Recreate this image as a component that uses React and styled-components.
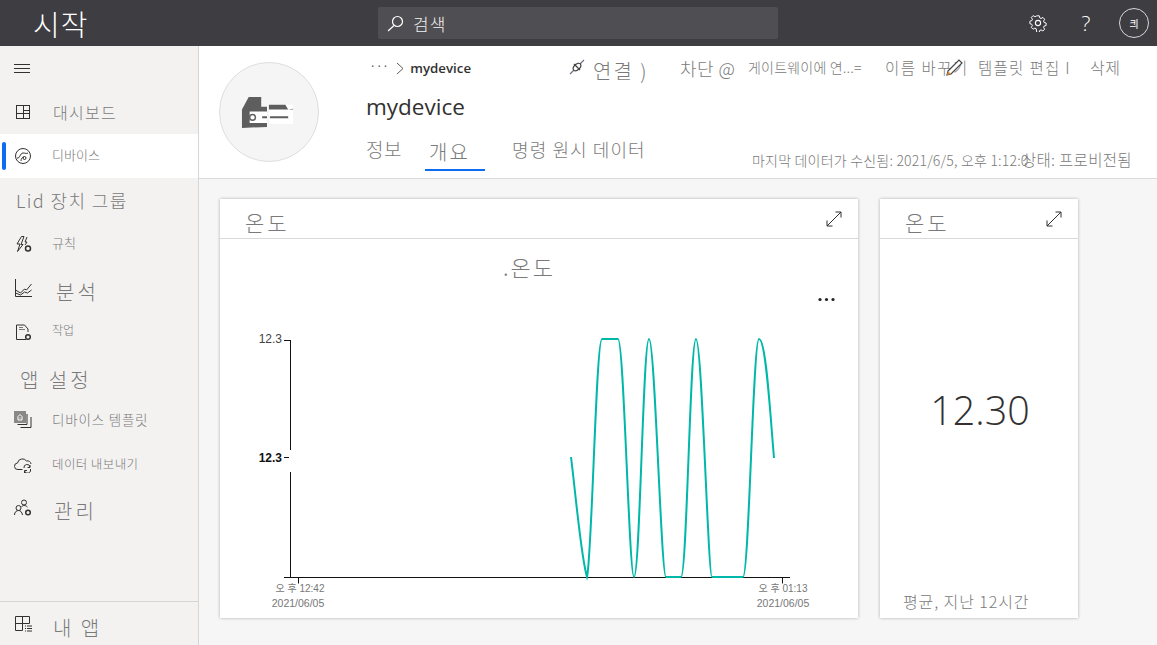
import React from "react";
import styled, { createGlobalStyle } from "styled-components";

const KR = `"Noto Sans CJK KR", "Open Sans", sans-serif`;
const UI = `"Open Sans", "Noto Sans CJK KR", sans-serif`;

const GlobalStyle = createGlobalStyle`
  html, body {
    margin: 0;
    padding: 0;
    height: 100%;
    overflow: hidden;
    background: #f6f6f6;
    font-family: ${KR};
  }
  * {
    box-sizing: border-box;
  }
`;

const Page = styled.div`
  width: 1157px;
  height: 645px;
  display: flex;
  flex-direction: column;
  overflow: hidden;
`;

const TopBar = styled.header`
  height: 46px;
  flex: none;
  background: #3e3d42;
  display: flex;
  align-items: center;
  color: #fff;
`;

const Brand = styled.div`
  width: 378px;
  padding-left: 33px;
  font-size: 29px;
  font-weight: 300;
  letter-spacing: 1px;
  line-height: 46px;
`;

const SearchBox = styled.div`
  width: 400px;
  height: 32px;
  background: #4f4e53;
  border-radius: 2px;
  display: flex;
  align-items: center;
  gap: 9px;
  padding-left: 9px;
  font-size: 17px;
  letter-spacing: 1px;
  font-weight: 300;
  color: #f3f2f1;
`;

const TopIcons = styled.div`
  margin-left: auto;
  display: flex;
  align-items: center;
  padding-right: 8px;
`;

const TopIcon = styled.div`
  width: ${({ $w }) => $w}px;
  display: flex;
  justify-content: center;
  font-family: ${UI};
  font-size: 21px;
  font-weight: 300;
  line-height: 30px;
`;

const Avatar = styled.div`
  width: 30px;
  height: 30px;
  margin-left: 9px;
  border: 1px solid #d8d8d8;
  border-radius: 50%;
  display: flex;
  align-items: center;
  justify-content: center;
  font-size: 10px;
`;

const Body = styled.div`
  flex: 1;
  display: flex;
  min-height: 0;
`;

const Sidebar = styled.nav`
  width: 199px;
  flex: none;
  background: #f3f2f1;
  border-right: 1px solid #d6d6d6;
  display: flex;
  flex-direction: column;
`;

const NavRow = styled.div`
  height: 44px;
  flex: none;
  display: flex;
  align-items: center;
  position: relative;
  padding-left: ${({ $indent }) => $indent ?? 14}px;
  background: ${({ $active }) => ($active ? "#fff" : "transparent")};
`;

const ActiveMark = styled.span`
  position: absolute;
  left: 2px;
  top: 8px;
  width: 4px;
  height: 28px;
  border-radius: 2px;
  background: #0f6cf0;
`;

const NavIcon = styled.svg`
  width: 18px;
  height: 18px;
  flex: none;
  fill: none;
  stroke: #323130;
  stroke-width: 1;
`;

const NavLabel = styled.span`
  margin-left: ${({ $gap }) => $gap ?? 20}px;
  padding-top: ${({ $dy }) => $dy ?? 0}px;
  margin-top: ${({ $up }) => ($up ? -$up : 0)}px;
  font-size: ${({ $size }) => $size ?? 13}px;
  font-weight: 300;
  letter-spacing: ${({ $track }) => $track ?? 0}px;
  color: #7a7a7a;
  white-space: nowrap;
`;

const NavFooter = styled.div`
  margin-top: auto;
  height: 44px;
  border-top: 1px solid #d6d6d6;
  display: flex;
  align-items: center;
  padding-left: 14px;
`;

const Main = styled.main`
  flex: 1;
  min-width: 0;
  display: flex;
  flex-direction: column;
`;

const DeviceHeader = styled.section`
  height: 133px;
  flex: none;
  background: #fff;
  border-bottom: 1px solid #dcdcdc;
  display: flex;
  padding-left: 20px;
`;

const DeviceBadge = styled.div`
  width: 100px;
  height: 100px;
  margin-top: 16px;
  flex: none;
  border-radius: 50%;
  background: #f5f5f5;
  border: 1px solid #dedede;
  display: flex;
  align-items: center;
  justify-content: center;
`;

const BadgeArt = styled.svg`
  width: 52px;
  height: 33px;
  margin-left: -4px;
`;

const DeviceInfo = styled.div`
  margin-left: 47px;
  flex: 1;
  min-width: 0;
  display: flex;
  flex-direction: column;
  position: relative;
`;

const TopLine = styled.div`
  height: 44px;
  display: flex;
  align-items: center;
`;

const Crumbs = styled.div`
  width: 203px;
  padding-left: 5px;
  display: flex;
  align-items: center;
  gap: 6px;
  font-family: ${UI};
  font-size: 13.3px;
  font-weight: 600;
  color: #323130;
`;

const Dots = styled.span`
  font-size: 13px;
  font-weight: 400;
  color: #605e5c;
  letter-spacing: 3px;
  margin-top: -4px;
`;

const Action = styled.div`
  width: ${({ $w }) => $w}px;
  flex: none;
  display: flex;
  align-items: center;
  gap: ${({ $gap }) => $gap ?? 0}px;
  margin-top: ${({ $dy }) => $dy ?? 0}px;
  font-size: ${({ $size }) => $size}px;
  font-weight: 300;
  letter-spacing: ${({ $track }) => $track ?? 0}px;
  color: #7a7a7a;
  white-space: nowrap;
  position: relative;
`;

const PlugMark = styled.svg`
  width: 16px;
  height: 16px;
  margin-top: -6px;
  fill: none;
  stroke: #444;
  stroke-width: 1.2;
`;

const PencilMark = styled.svg`
  position: absolute;
  left: 60px;
  top: 1px;
  width: 20px;
  height: 20px;
`;

const DeviceName = styled.h1`
  margin: 0;
  height: 36px;
  font-family: ${UI};
  font-size: 22.5px;
  font-weight: 400;
  line-height: 34px;
  color: #323130;
`;

const TabRow = styled.div`
  display: flex;
  margin-top: 8px;
  height: 37px;
`;

const Tab = styled.div`
  width: ${({ $w }) => $w}px;
  flex: none;
  padding: 0 ${({ $pad }) => $pad ?? 0}px;
  margin-left: ${({ $ml }) => $ml ?? 0}px;
  height: 37px;
  font-size: ${({ $size }) => $size ?? 18}px;
  font-weight: 300;
  letter-spacing: ${({ $track }) => $track ?? 0}px;
  line-height: ${({ $active }) => ($active ? 36 : 30)}px;
  color: #7a7a7a;
  white-space: nowrap;
  border-bottom: 2px solid ${({ $active }) => ($active ? "#0f6cf0" : "transparent")};
`;

const StatusLine = styled.div`
  position: absolute;
  left: 386px;
  top: 102px;
  display: flex;
  align-items: baseline;
  font-weight: 300;
  color: #7a7a7a;
  white-space: nowrap;
`;

const StatusCell = styled.span`
  width: ${({ $w }) => $w}px;
  flex: none;
  font-size: ${({ $size }) => $size ?? 13}px;
  letter-spacing: ${({ $track }) => $track ?? 0}px;
`;

const Board = styled.div`
  flex: 1;
  min-height: 0;
  display: flex;
  gap: 22px;
  padding: 20px 0 0 21px;
  background: #f6f6f6;
`;

const Card = styled.article`
  width: ${({ $w }) => $w}px;
  height: 419px;
  flex: none;
  background: #fff;
  box-shadow: 0 0 3px rgba(0, 0, 0, 0.3);
  display: flex;
  flex-direction: column;
`;

const CardHead = styled.div`
  height: 40px;
  flex: none;
  border-bottom: 1px solid #d9d9d9;
  display: flex;
  align-items: flex-start;
  justify-content: space-between;
  padding: 6px 15px 0 25px;
`;

const CardTitle = styled.span`
  font-size: 21px;
  font-weight: 300;
  letter-spacing: 3px;
  color: #7a7a7a;
  line-height: 34px;
`;

const Expand = styled.svg`
  width: 18px;
  height: 18px;
  margin-top: 5px;
  fill: none;
  stroke: #323130;
  stroke-width: 1;
`;

const ChartBody = styled.div`
  flex: 1;
  min-height: 0;
  display: flex;
  flex-direction: column;
`;

const ChartTitle = styled.div`
  height: 58px;
  padding-right: 20px;
  text-align: center;
  font-size: 22px;
  font-weight: 300;
  letter-spacing: 2px;
  line-height: 54px;
  color: #7a7a7a;
`;

const Chart = styled.svg`
  display: block;
  width: 638px;
  height: 320px;
`;

const AxisText = styled.text`
  font-family: "Liberation Sans", ${KR};
  font-size: ${({ $size }) => $size ?? 10}px;
  font-weight: ${({ $bold }) => ($bold ? 600 : 400)};
  fill: ${({ $bold, $dark }) => ($bold ? "#111" : $dark ? "#444" : "#777")};
`;

const ValueBody = styled.div`
  flex: 1;
  min-height: 0;
  display: flex;
  flex-direction: column;
  align-items: center;
`;

const Reading = styled.div`
  margin-top: 136px;
  padding-left: 2px;
  font-family: ${UI};
  font-size: 39.5px;
  font-weight: 300;
  line-height: 70px;
  color: #323130;
`;

const ReadingNote = styled.div`
  margin-top: auto;
  align-self: flex-start;
  padding: 0 0 5px 23px;
  font-size: 16px;
  font-weight: 300;
  letter-spacing: 0.9px;
  line-height: 24px;
  color: #7a7a7a;
`;

const CURVE =
  "M351 165 C356 205 361 265 367 285 C372 265 376 47 382 47 L398 47 " +
  "C404 47 409 285 414 285 C420 285 423 47 429 47 C435 47 441 285 446 285 " +
  "L461 285 C467 285 470 47 476 47 C482 47 488 285 492 285 L523 285 " +
  "C529 285 533 47 539 47 C546 47 550 120 554 166";

const Icons = {
  dashboard: (
    <>
      <rect x="2.500" y="2.500" width="13" height="13" />
      <path d="M2.500 10.500h13M9.500 2.500v13M9.500 7.500h6" />
    </>
  ),
  device: (
    <>
      <circle cx="9" cy="9" r="7.500" />
      <path d="M3 11c3 1 3-5 6-5s3 1 5 0M7 14c0-2 1-4 3-4" />
      <circle cx="10.500" cy="11" r="1.500" />
    </>
  ),
  rules: (
    <>
      <path d="M7.500 1.500 3 9h3L3.500 16.500 9 9.500H7L10 1.500zM13 2 11 7h2l-2 3" />
      <circle cx="14" cy="13.500" r="2.500" strokeWidth="1.500" />
    </>
  ),
  analytics: <path d="M1.500 0v17.500H18M1.500 11l5 3 4-4 2 1 5-6M1.500 14l5 2 4-3 3 1 4-3" />,
  jobs: (
    <>
      <path d="M12 16.500H2.500V2h8l3.500 4v3" />
      <path d="M5 4.500h4M5 6.500h6" stroke="#777" />
      <circle cx="14" cy="14" r="2.300" strokeWidth="1.500" />
    </>
  ),
  template: (
    <>
      <rect x="0" y="0" width="12" height="12" fill="#8a8886" stroke="none" />
      <path d="M3.500 13.500H13V3M6.500 16.500H17V6" />
      <path d="M4 9V5.500l2-2 2 2V9zM6 6.500v1" stroke="#fff" />
    </>
  ),
  exportData: (
    <>
      <path d="M8.500 14.500H4a3 3 0 0 1-.5-6.500 5 5 0 0 1 9-2 3.500 3.500 0 0 1 4.500 3" />
      <path d="M10 13a3 3 0 0 1 6-1M16.500 14a3 3 0 0 1-6 2M16 10v2.500h-2.500M10.500 18v-2.500H13" />
    </>
  ),
  admin: (
    <>
      <circle cx="10" cy="3.500" r="2.500" />
      <circle cx="4.500" cy="9" r="2.500" />
      <path d="M.5 16c0-3 2-4.500 4-4.500S8 13 8.500 16M7.500 8c1-2 4-2 6 0" />
      <circle cx="14" cy="13.500" r="2.300" strokeWidth="1.500" />
    </>
  ),
  apps: (
    <>
      <path d="M1.500 15.500V1.500h14v7M8.500 1.500v14M1.500 8.500h14M1.500 15.500h7" />
      <path d="M11 11h1M13 11h5M11 13.500h1M13 13.500h5M11 16h1M13 16h5" />
    </>
  ),
};

const NavItem = ({ icon, label, active, size, gap, track, dy, up }) => (
  <NavRow $active={active}>
    {active && <ActiveMark />}
    <NavIcon viewBox="0 0 18 18">{Icons[icon]}</NavIcon>
    <NavLabel $size={size} $gap={gap} $track={track} $dy={dy} $up={up}>
      {label}
    </NavLabel>
  </NavRow>
);

const ExpandIcon = () => (
  <Expand viewBox="0 0 18 18">
    <path d="M2 16 16 2M10.500 2H16v5.500M2 10.500V16h5.500" />
  </Expand>
);

const App = () => (
  <Page>
    <GlobalStyle />
    <TopBar>
      <Brand>시작</Brand>
      <SearchBox>
        <svg width="17" height="17" viewBox="0 0 17 17" fill="none" stroke="#fff" strokeWidth="1.2">
          <circle cx="10.500" cy="6.500" r="5" />
          <path d="M7 10.500 1 16" />
        </svg>
        검색
      </SearchBox>
      <TopIcons>
        <TopIcon $w={48}>
          <svg width="18" height="18" viewBox="0 0 18 18" fill="none" stroke="#fff" strokeWidth="1.1">
            <circle cx="9" cy="9" r="2.600" />
            <path d="M7.600 1h2.800l.5 2.300 1.500.7 2.100-1.200 1.900 2-1.200 2 .6 1.600 2.200.6v2.800l-2.200.6-.6 1.500 1.200 2-2 2-2-1.200-1.500.6-.6 2.200H7.600L7 15.300l-1.500-.6-2 1.200-2-2 1.200-2-.6-1.500L0 9.800V7l2.100-.6.7-1.600-1.200-2 2-2 2 1.200 1.500-.6z" transform="translate(0.9 0.9) scale(0.9)" />
          </svg>
        </TopIcon>
        <TopIcon $w={48}>?</TopIcon>
        <Avatar>킈</Avatar>
      </TopIcons>
    </TopBar>
    <Body>
      <Sidebar>
        <NavRow>
          <svg width="16" height="9" viewBox="0 0 16 9" stroke="#323130" strokeWidth="1">
            <path d="M0 .5h16M0 4.500h16M0 8.500h16" />
          </svg>
        </NavRow>
        <NavItem icon="dashboard" label="대시보드" size={16} track={1.300} gap={21} />
        <NavItem icon="device" label="디바이스" active size={13} up={3} />
        <NavRow $indent={16}>
          <NavLabel $gap={0} $size={18} $track={1.400}>Lid 장치 그룹</NavLabel>
        </NavRow>
        <NavItem icon="rules" label="규칙" size={13} up={3} />
        <NavItem icon="analytics" label="분석" size={20} gap={24} track={3} dy={6} />
        <NavItem icon="jobs" label="작업" size={12} up={5} />
        <NavRow $indent={20}>
          <NavLabel $gap={0} $size={20} $track={3} $dy={6}>앱 설정</NavLabel>
        </NavRow>
        <NavItem icon="template" label="디바이스 템플릿" size={13.5} track={0.8} up={2} />
        <NavItem icon="exportData" label="데이터 내보내기" size={12.500} track={0.4} up={2} />
        <NavItem icon="admin" label="관리" size={20} gap={22} track={3} dy={4} />
        <NavFooter>
          <NavIcon viewBox="0 0 18 18">{Icons.apps}</NavIcon>
          <NavLabel $size={20} $track={2.500} $dy={8} $gap={21}>내 앱</NavLabel>
        </NavFooter>
      </Sidebar>
      <Main>
        <DeviceHeader>
          <DeviceBadge>
            <BadgeArt viewBox="0 0 54 34">
              <path d="M1 33V14L8 1h13v10h6v21z" fill="#5e5e5e" />
              <path d="M9 16h18v12H9zM29 9h25v20H29z" fill="#fff" />
              <path d="M29 9h17l3 5 5-1v1H29z" fill="#5e5e5e" />
              <circle cx="12" cy="22" r="3" fill="#fff" stroke="#5e5e5e" strokeWidth="1.500" />
              <path d="M22 22h5M30 22h19" stroke="#5e5e5e" strokeWidth="2" />
            </BadgeArt>
          </DeviceBadge>
          <DeviceInfo>
            <TopLine>
              <Crumbs>
                <Dots>···</Dots>
                <svg width="8" height="13" viewBox="0 0 8 13" fill="none" stroke="#605e5c">
                  <path d="m1 1 6 5.500L1 12" />
                </svg>
                mydevice
              </Crumbs>
              <Action $w={111} $size={20} $gap={8} $track={2} $dy={4}>
                <PlugMark viewBox="0 0 16 16">
                  <path d="M1 15l4-4M11 5l4-4" stroke="#7a6a8a" />
                  <ellipse cx="8" cy="8" rx="2.800" ry="4.500" transform="rotate(45 8 8)" />
                  <path d="M5 5l6 6" />
                </PlugMark>
                연결 )
              </Action>
              <Action $w={68} $size={18} $track={0.5}>차단 @</Action>
              <Action $w={137} $size={14} $track={0.2} $dy={-2}>게이트웨이에 연...=</Action>
              <Action $w={93} $size={15.5} $track={1.500} $dy={-2}>
                이름 바꾸기
                <PencilMark viewBox="0 0 20 20" fill="none" stroke="#444" strokeWidth="1.2">
                  <path d="M3 14 14 3l3 3L6 17l-4 1z" fill="#fff" />
                  <path d="m2 18 1-4 3 3z" fill="#e08a2e" stroke="none" />
                </PencilMark>
              </Action>
              <Action $w={112} $size={15.5} $track={1.300} $dy={-2}>템플릿 편집 I</Action>
              <Action $w={40} $size={16} $track={0.5} $dy={-2}>삭제</Action>
            </TopLine>
            <DeviceName>mydevice</DeviceName>
            <TabRow>
              <Tab $w={59} $size={19} $track={0.5}>정보</Tab>
              <Tab $w={60} $pad={4} $active $size={20} $track={2}>개요</Tab>
              <Tab $w={150} $ml={27} $size={18} $track={1.100}>명령 원시 데이터</Tab>
            </TabRow>
            <StatusLine>
              <StatusCell $w={270} $size={14} $track={0.2}>마지막 데이터가 수신됨: 2021/6/5, 오후 1:12:0</StatusCell>
              <StatusCell $w={115} $size={15.5} $track={0.3}>상태: 프로비전됨</StatusCell>
            </StatusLine>
          </DeviceInfo>
        </DeviceHeader>
        <Board>
          <Card $w={638}>
            <CardHead>
              <CardTitle>온도</CardTitle>
              <ExpandIcon />
            </CardHead>
            <ChartBody>
              <ChartTitle>.온도</ChartTitle>
              <Chart viewBox="0 0 638 320">
                <circle cx="600" cy="2.500" r="1.600" fill="#222" />
                <circle cx="606.500" cy="2.500" r="1.600" fill="#222" />
                <circle cx="613" cy="2.500" r="1.600" fill="#222" />
                <path
                  d="M70.500 43V153M70.500 175V280.500M64 280.500H570M64 43.500h6.500M64 160.500h5M78.500 280.500v6M562.500 280.500v6"
                  stroke="#111"
                  fill="none"
                />
                <path d={CURVE} fill="none" stroke="#00b8a9" strokeWidth="2" transform="translate(0 -5)" />
                <AxisText x="62" y="46" textAnchor="end" $size={12} $dark>12.3</AxisText>
                <AxisText x="62" y="165" textAnchor="end" $size={12} $bold>12.3</AxisText>
                <AxisText x="80" y="295" textAnchor="middle">오 후 12:42</AxisText>
                <AxisText x="78" y="310" textAnchor="middle" $size={10.5}>2021/06/05</AxisText>
                <AxisText x="563" y="295" textAnchor="middle">오 후 01:13</AxisText>
                <AxisText x="563" y="310" textAnchor="middle" $size={10.5}>2021/06/05</AxisText>
              </Chart>
            </ChartBody>
          </Card>
          <Card $w={198}>
            <CardHead>
              <CardTitle>온도</CardTitle>
              <ExpandIcon />
            </CardHead>
            <ValueBody>
              <Reading>12.30</Reading>
              <ReadingNote>평균, 지난 12시간</ReadingNote>
            </ValueBody>
          </Card>
        </Board>
      </Main>
    </Body>
  </Page>
);

export default App;
